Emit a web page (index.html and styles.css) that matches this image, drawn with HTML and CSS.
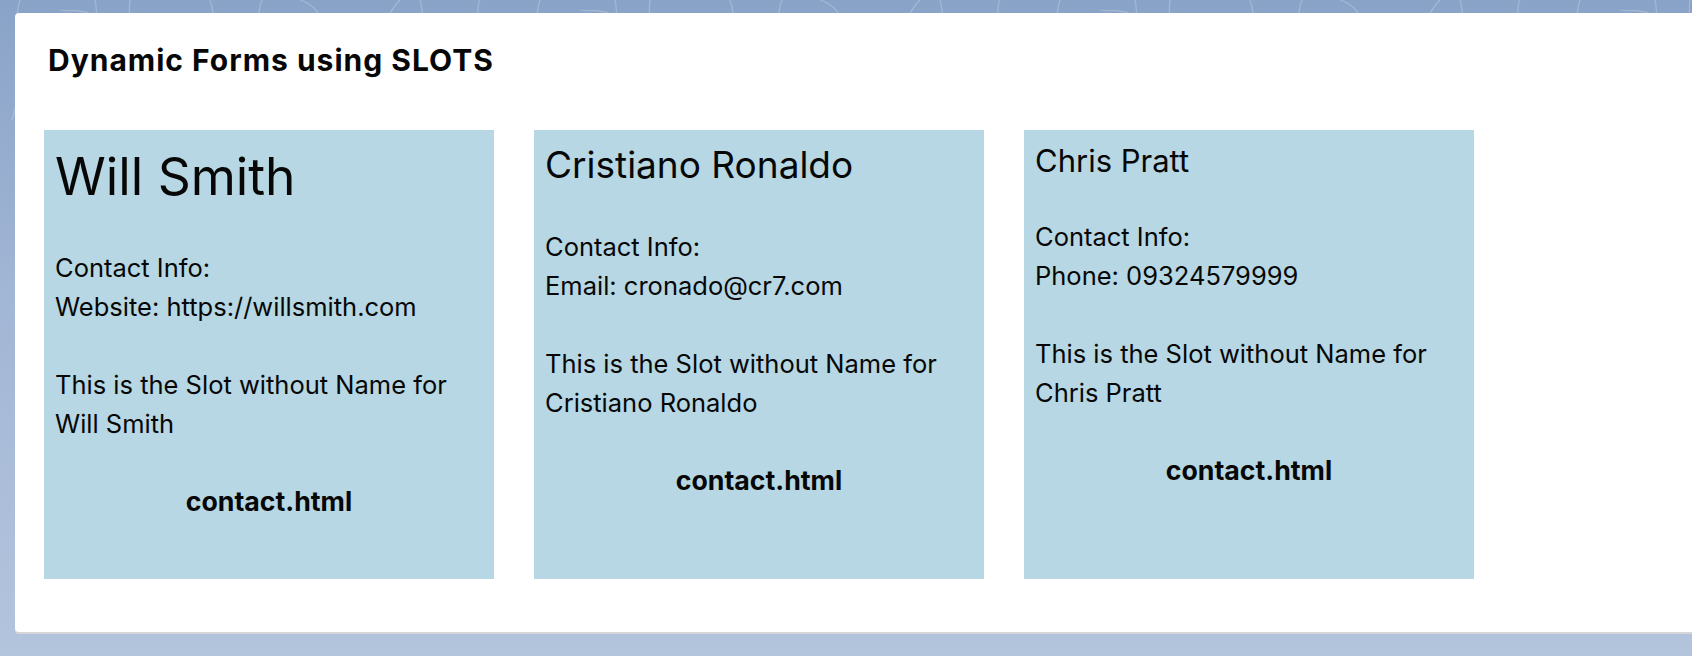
FILE: index.html
```html
<!DOCTYPE html>
<html lang="en">
<head>
<meta charset="utf-8">
<title>Dynamic Forms using SLOTS</title>
<link rel="stylesheet" href="styles.css">
</head>
<body>
<div class="page">
  <div class="panel">
    <h2 class="panel-title">Dynamic Forms using SLOTS</h2>
    <div class="contacts">
      <div class="contact">
        <h1 class="name name-1">Will Smith</h1>
        <p class="info">Contact Info:<br>Website: https://willsmith.com</p>
        <p class="slot">This is the Slot without Name for Will Smith</p>
        <p class="file">contact.html</p>
      </div>
      <div class="contact">
        <h2 class="name name-2">Cristiano Ronaldo</h2>
        <p class="info">Contact Info:<br>Email: cronado@cr7.com</p>
        <p class="slot">This is the Slot without Name for Cristiano Ronaldo</p>
        <p class="file">contact.html</p>
      </div>
      <div class="contact">
        <h3 class="name name-3">Chris Pratt</h3>
        <p class="info">Contact Info:<br>Phone: 09324579999</p>
        <p class="slot">This is the Slot without Name for Chris Pratt</p>
        <p class="file">contact.html</p>
      </div>
    </div>
  </div>
</div>
</body>
</html>
```
FILE: styles.css
```css
html, body {
  margin: 0;
  height: 100%;
}
body {
  background-color: #9db2d2;
  background-image:
    url("data:image/svg+xml,%3Csvg xmlns='http://www.w3.org/2000/svg' width='520' height='120' viewBox='0 0 520 120'%3E%3Cg fill='none' stroke='%23ffffff' stroke-opacity='0.22' stroke-width='1.2'%3E%3Cpath d='M20 0 C10 30 30 60 12 120'/%3E%3Cpath d='M95 0 C100 20 90 40 110 60 S120 100 105 120'/%3E%3Cpath d='M130 0 C125 40 150 70 140 120'/%3E%3Cpath d='M210 0 C220 25 200 50 230 80'/%3E%3Cpath d='M262 0 C250 30 275 55 262 120'/%3E%3Cpath d='M300 0 C330 10 320 40 350 45 S380 20 400 0'/%3E%3Cpath d='M420 0 C430 35 410 70 440 120'/%3E%3Cpath d='M480 0 C470 20 500 45 490 90'/%3E%3Cpath d='M60 10 C70 12 80 8 90 14'/%3E%3C/g%3E%3C/svg%3E"),
    linear-gradient(180deg, #89a3c8 0%, #a2b6d5 45%, #b3c4dd 100%);
  background-repeat: repeat-x, no-repeat;
  background-position: 0 0, 0 0;
  font-family: Inter, "Noto Sans", sans-serif;
  color: #080707;
  overflow: hidden;
}
.page {
  padding: 13px 0 0 15px;
}
.panel {
  width: 1700px;
  height: 619px;
  background: #fff;
  border-radius: 4px;
  box-shadow: 0 2px 0 #d6d6d6;
  box-sizing: border-box;
  padding: 28px 0 0 29px;
}
.panel-title {
  margin: 0 0 0 4px;
  font-size: 30px;
  font-weight: 700;
  line-height: 38px;
  letter-spacing: 1px;
}
.contacts {
  display: flex;
  gap: 40px;
  margin-top: 51px;
}
.contact {
  width: 450px;
  height: 449px;
  background: #b6d7e3;
  box-sizing: border-box;
  padding: 0 11px;
  font-size: 25.5px;
  line-height: 39px;
}
.name {
  font-weight: 400;
  margin: 0;
}
.name-1 {
  font-size: 51.5px;
  line-height: 60px;
  margin-top: 16px;
  margin-bottom: 42px;
}
.name-2 {
  font-size: 37px;
  line-height: 46px;
  margin-top: 12px;
  margin-bottom: 39px;
}
.name-3 {
  font-size: 31px;
  line-height: 38px;
  margin-top: 12px;
  margin-bottom: 37px;
}
.info, .slot, .file {
  margin: 0;
}
.slot {
  margin-top: 39px;
}
.file {
  margin-top: 39px;
  text-align: center;
  font-weight: 700;
  font-size: 26.7px;
}
```
